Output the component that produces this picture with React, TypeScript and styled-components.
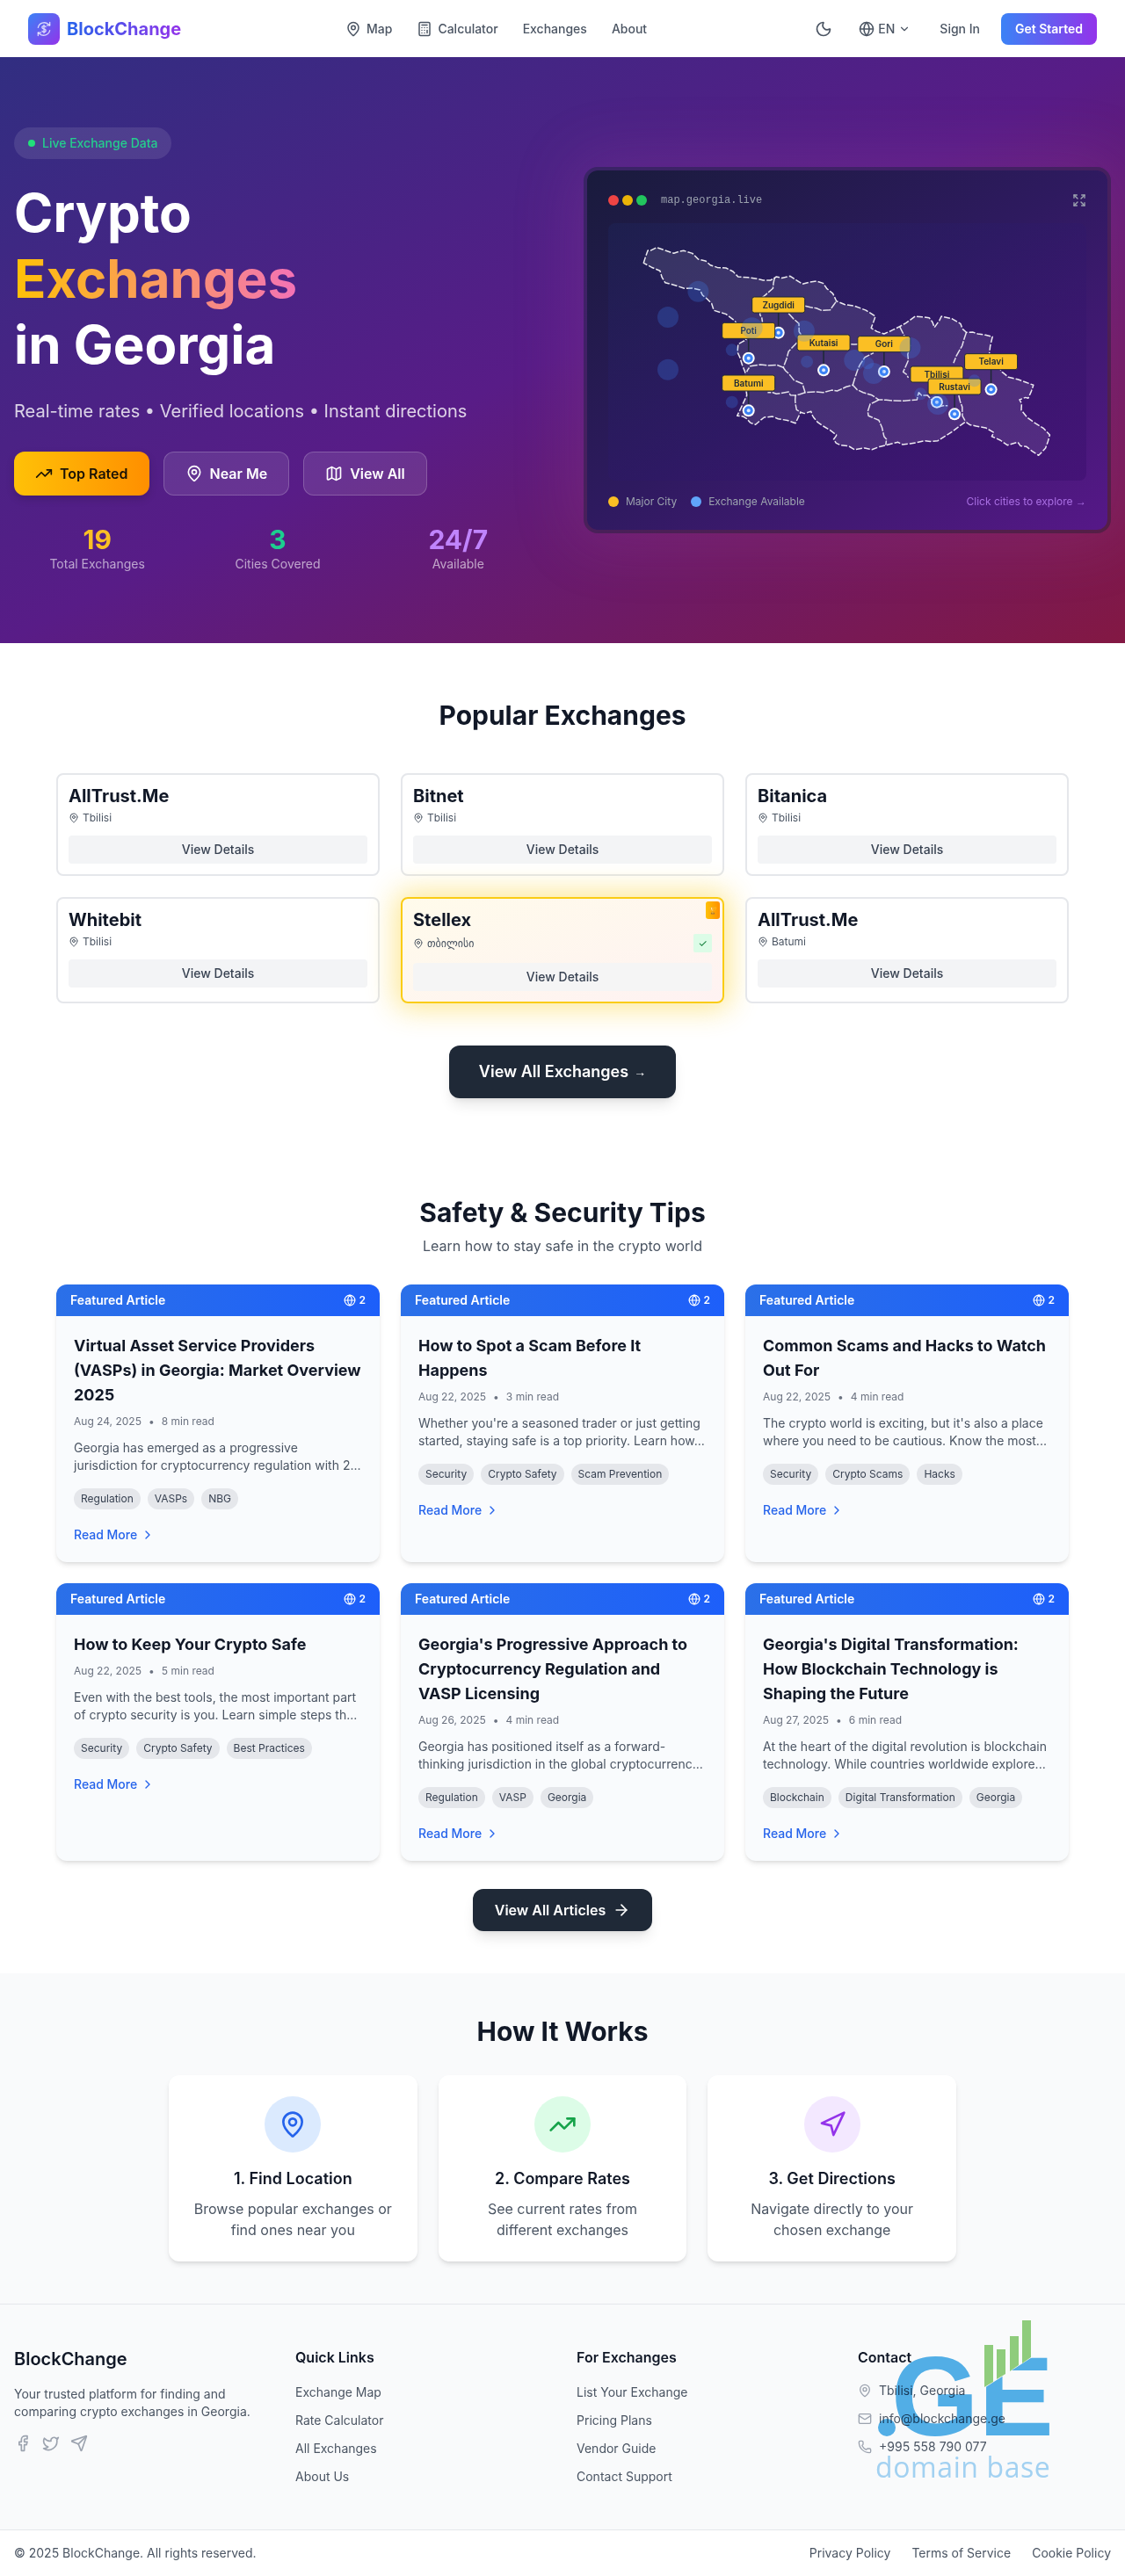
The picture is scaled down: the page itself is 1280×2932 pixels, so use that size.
import React from 'react';
import styled, { createGlobalStyle } from 'styled-components';
import {
  ArrowRight,
  Calculator,
  ChevronDown,
  ChevronRight,
  Expand,
  Facebook,
  Globe,
  Mail,
  Map as MapIcon,
  MapPin,
  Moon,
  Navigation,
  Phone,
  Send,
  TrendingUp,
  Twitter,
} from 'lucide-react';

const GlobalStyle = createGlobalStyle`
  * { box-sizing: border-box; }
  html, body { margin: 0; padding: 0; background: #fff; }
  body {
    font-family: Inter, "DejaVu Sans", "Liberation Sans", sans-serif;
    color: #111827;
    font-size: 16px;
    line-height: 24px;
  }
  a { color: inherit; text-decoration: none; }
  h1, h2, h3, h4, p, ul { margin: 0; padding: 0; }
  li { list-style: none; }
`;

const Page = styled.div`
  position: relative;
  width: 1280px;
  height: 2932px;
  overflow: hidden;
`;

/* nav */
const Nav = styled.nav`
  height: 65px;
  padding: 0 32px;
  display: flex;
  align-items: center;
  background: #fff;
`;

const Brand = styled.a`
  display: flex;
  align-items: center;
  gap: 8px;
  width: 361px;
`;

const BrandMark = styled.span`
  width: 36px;
  height: 36px;
  border-radius: 8px;
  display: flex;
  align-items: center;
  justify-content: center;
  background: linear-gradient(to bottom right, #3b82f6, #9333ea);
`;

const BrandName = styled.span`
  font-size: 20px;
  line-height: 28px;
  font-weight: 700;
  background: linear-gradient(90deg, #2563eb, #9333ea);
  -webkit-background-clip: text;
  background-clip: text;
  color: transparent;
`;

const NavLinks = styled.div`
  display: flex;
  align-items: center;
  gap: 28px;
`;

const NavLink = styled.a`
  display: flex;
  align-items: center;
  gap: 6px;
  font-size: 14px;
  line-height: 20px;
  font-weight: 500;
  color: #4b5563;
`;

const NavRight = styled.div`
  margin-left: auto;
  display: flex;
  align-items: center;
  color: #4b5563;
`;

const ThemeToggle = styled.span`
  display: flex;
  margin-right: 30px;
`;

const LangPicker = styled.span`
  display: flex;
  align-items: center;
  gap: 4px;
  font-size: 14px;
  font-weight: 500;
  margin-right: 33px;
`;

const SignIn = styled.a`
  font-size: 14px;
  font-weight: 500;
  margin-right: 24px;
`;

const GetStarted = styled.a`
  width: 109px;
  height: 36px;
  border-radius: 8px;
  display: flex;
  align-items: center;
  justify-content: center;
  font-size: 14px;
  font-weight: 600;
  color: #fff;
  background: linear-gradient(90deg, #3b82f6, #9333ea);
`;

/* hero */
const Hero = styled.section`
  height: 667px;
  padding: 80px 16px;
  display: grid;
  grid-template-columns: 600px 600px;
  column-gap: 48px;
  align-items: center;
  background: linear-gradient(to bottom right, #312e81 0%, #581c87 50%, #831843 100%);
`;

const LiveBadge = styled.div`
  display: inline-flex;
  align-items: center;
  gap: 8px;
  height: 36px;
  padding: 0 16px;
  border-radius: 18px;
  background: rgba(255, 255, 255, 0.1);
  font-size: 14px;
  font-weight: 500;
  color: #24cf8d;
  margin-bottom: 24px;
  vertical-align: top;
`;

const LiveDot = styled.span`
  width: 8px;
  height: 8px;
  border-radius: 50%;
  background: #22e07a;
`;

const HeroTitle = styled.h1`
  font-size: 60px;
  line-height: 75px;
  font-weight: 700;
  color: #fff;
  margin-bottom: 24px;

  span {
    display: block;
  }
`;

const GradientWord = styled.span`
  width: fit-content;
  background: linear-gradient(90deg, #ffc107, #f472b6);
  -webkit-background-clip: text;
  background-clip: text;
  color: transparent;
`;

const HeroSub = styled.p`
  font-size: 20px;
  line-height: 28px;
  color: rgba(255, 255, 255, 0.8);
  margin-bottom: 32px;
`;

const HeroActions = styled.div`
  display: flex;
  gap: 16px;
  margin-bottom: 32px;
`;

const HeroButton = styled.a<{ $primary?: boolean }>`
  height: 50px;
  padding: 0 24px;
  border-radius: 12px;
  display: flex;
  align-items: center;
  gap: 8px;
  font-weight: 600;
  color: ${(p) => (p.$primary ? '#1a1206' : '#fff')};
  background: ${(p) =>
    p.$primary ? 'linear-gradient(90deg, #ffc107, #ff8f00)' : 'rgba(255, 255, 255, 0.1)'};
  border: ${(p) => (p.$primary ? 'none' : '1px solid rgba(255, 255, 255, 0.2)')};
  box-shadow: ${(p) => (p.$primary ? '0 4px 10px rgba(0, 0, 0, 0.15)' : 'none')};
`;

const Stats = styled.div`
  display: grid;
  grid-template-columns: repeat(3, 1fr);
  gap: 16px;
  text-align: center;
`;

const StatValue = styled.div<{ $color: string }>`
  font-size: 30px;
  line-height: 36px;
  font-weight: 700;
  color: ${(p) => p.$color};
`;

const StatLabel = styled.div`
  font-size: 14px;
  line-height: 20px;
  color: rgba(255, 255, 255, 0.6);
`;

/* map window */
const MapCard = styled.div`
  padding: 24px;
  height: 417px;
  border-radius: 16px;
  border: 4px solid rgba(31, 41, 55, 0.4);
  background: linear-gradient(to bottom right, #191b3c 0%, #2e1a5f 48%, #561888 100%) padding-box;
  box-shadow: 0 0 70px 14px rgba(190, 90, 170, 0.16);
`;

const MapHeader = styled.div`
  height: 20px;
  margin-bottom: 16px;
  display: flex;
  align-items: center;
  justify-content: space-between;
  color: #9ca3af;
`;

const WindowDots = styled.div`
  display: flex;
  align-items: center;
  gap: 4px;
`;

const WindowDot = styled.span<{ $color: string }>`
  width: 12px;
  height: 12px;
  border-radius: 50%;
  background: ${(p) => p.$color};
`;

const WindowUrl = styled.span`
  margin-left: 12px;
  font-family: "Liberation Mono", monospace;
  font-size: 12px;
  color: #9ca3af;
`;

const MapArea = styled.div`
  height: 293px;
  border-radius: 8px;
  background: linear-gradient(to bottom right, rgba(30, 58, 138, 0.14), rgba(49, 10, 101, 0.35));
  margin-bottom: 16px;

  svg {
    display: block;
  }
`;

const MapLegend = styled.div`
  height: 16px;
  display: flex;
  align-items: center;
  font-size: 12px;
  line-height: 16px;
  color: #9ca3af;
`;

const LegendDot = styled.span<{ $color: string }>`
  width: 12px;
  height: 12px;
  border-radius: 50%;
  margin-right: 8px;
  background: ${(p) => p.$color};
`;

const LegendItem = styled.span`
  margin-right: 16px;
`;

const LegendHint = styled.span`
  margin-left: auto;
  color: #c084fc;
  opacity: 0.8;
`;

const SmallArrow = styled.span<{ $size: number }>`
  font-family: "Liberation Sans", sans-serif;
  font-size: ${(p) => p.$size}px;
`;

const CityLabel = styled.text`
  font-family: Inter, sans-serif;
  font-size: 10px;
  font-weight: 600;
  fill: #1f2937;
  text-anchor: middle;
`;

/* sections */
const Section = styled.section<{ $top: number; $bottom: number }>`
  padding: ${(p) => p.$top}px 0 ${(p) => p.$bottom}px;
`;

const Title = styled.h2`
  font-size: 30px;
  line-height: 36px;
  font-weight: 700;
  text-align: center;
  color: #111827;
`;

const Subtitle = styled.p`
  margin-top: 8px;
  text-align: center;
  color: #4b5563;
`;

const ThreeGrid = styled.div<{ $top: number }>`
  width: 1152px;
  margin: ${(p) => p.$top}px auto 0;
  display: grid;
  grid-template-columns: repeat(3, 1fr);
  gap: 24px;
`;

/* exchange cards */
const ExchangeCard = styled.div<{ $featured?: boolean }>`
  position: relative;
  padding: 12px;
  border-radius: 8px;
  border: 2px solid ${(p) => (p.$featured ? '#facc15' : '#e5e7eb')};
  background: ${(p) =>
    p.$featured ? 'linear-gradient(to bottom right, #fffbeb, #fef2f2)' : '#fff'};
  box-shadow: ${(p) => (p.$featured ? '0 0 32px 6px rgba(250, 204, 21, 0.45)' : 'none')};
`;

const ExchangeName = styled.h3`
  font-size: 20px;
  line-height: 24px;
  font-weight: 700;
  color: #111827;
  margin-bottom: 4px;
`;

const ExchangePlace = styled.div`
  min-height: 17px;
  margin-bottom: 12px;
  display: flex;
  align-items: center;
  gap: 4px;
  font-size: 12px;
  line-height: 17px;
  color: #4b5563;
`;

const VerifiedMark = styled.span`
  margin-left: auto;
  width: 21px;
  height: 21px;
  display: flex;
  align-items: center;
  justify-content: center;
  border-radius: 2px;
  background: #dcfce7;
  color: #15803d;
  font-size: 12px;
`;

const CornerBadge = styled.span`
  position: absolute;
  top: 3px;
  right: 3px;
  width: 16px;
  height: 20px;
  border-radius: 3px;
  display: flex;
  align-items: center;
  justify-content: center;
  font-size: 8px;
  color: #fff;
  background: linear-gradient(90deg, #ffc107, #ff8f00);
`;

const DetailsButton = styled.a<{ $tinted?: boolean }>`
  height: 32px;
  display: flex;
  align-items: center;
  justify-content: center;
  border-radius: 4px;
  font-size: 14px;
  font-weight: 500;
  color: #374151;
  background: ${(p) => (p.$tinted ? 'rgba(243, 244, 246, 0.85)' : '#f3f4f6')};
`;

const ViewExchanges = styled.a`
  width: 258px;
  height: 60px;
  margin: 48px auto 0;
  display: flex;
  align-items: center;
  justify-content: center;
  gap: 6px;
  border-radius: 12px;
  font-size: 18px;
  font-weight: 600;
  color: #fff;
  background: #1f2937;
  box-shadow: 0 10px 15px -3px rgba(0, 0, 0, 0.1), 0 4px 6px -4px rgba(0, 0, 0, 0.1);
`;

/* articles */
const ArticleCard = styled.article`
  border-radius: 12px;
  overflow: hidden;
  background: #f9fbfd;
  box-shadow: 0 4px 6px -1px rgba(0, 0, 0, 0.1), 0 2px 4px -2px rgba(0, 0, 0, 0.1);
`;

const ArticleHead = styled.div`
  height: 36px;
  padding: 0 16px;
  display: flex;
  align-items: center;
  justify-content: space-between;
  font-size: 14px;
  font-weight: 600;
  color: #fff;
  background: linear-gradient(90deg, #2b70e8, #1d5ffa);
`;

const HeadCount = styled.span`
  display: flex;
  align-items: center;
  gap: 4px;
  font-size: 12px;
`;

const ArticleBody = styled.div`
  padding: 20px 20px 21px;
`;

const ArticleTitle = styled.h3`
  font-size: 18px;
  line-height: 28px;
  font-weight: 700;
  color: #111827;
  margin-bottom: 8px;
`;

const ArticleMeta = styled.div`
  display: flex;
  align-items: center;
  gap: 8px;
  font-size: 12px;
  line-height: 16px;
  color: #6b7280;
  margin-bottom: 12px;
`;

const ArticleExcerpt = styled.p`
  font-size: 14px;
  line-height: 20px;
  color: #4b5563;
  margin-bottom: 16px;
`;

const TagRow = styled.div`
  display: flex;
  gap: 8px;
  margin-bottom: 19px;
`;

const Tag = styled.span`
  height: 24px;
  padding: 0 8px;
  display: flex;
  align-items: center;
  border-radius: 12px;
  background: #e5e7eb;
  font-size: 12px;
  color: #374151;
`;

const ReadMore = styled.a`
  display: flex;
  align-items: center;
  gap: 4px;
  font-size: 14px;
  line-height: 20px;
  font-weight: 500;
  color: #2563eb;
`;

const ViewArticles = styled.a`
  width: 204px;
  height: 48px;
  margin: 32px auto 0;
  display: flex;
  align-items: center;
  justify-content: center;
  gap: 8px;
  border-radius: 12px;
  font-weight: 600;
  color: #fff;
  background: #1f2937;
  box-shadow: 0 10px 15px -3px rgba(0, 0, 0, 0.1), 0 4px 6px -4px rgba(0, 0, 0, 0.1);
`;

/* how it works */
const HowSection = styled.section`
  padding: 48px 0;
  background: #f9fafb;
`;

const StepGrid = styled.div`
  width: 896px;
  margin: 32px auto 0;
  display: grid;
  grid-template-columns: repeat(3, 1fr);
  gap: 24px;
`;

const StepCard = styled.div`
  padding: 24px;
  text-align: center;
  border-radius: 12px;
  background: #fff;
  box-shadow: 0 4px 6px -1px rgba(0, 0, 0, 0.1), 0 2px 4px -2px rgba(0, 0, 0, 0.1);
`;

const StepIcon = styled.div<{ $bg: string; $color: string }>`
  width: 64px;
  height: 64px;
  margin: 0 auto 16px;
  border-radius: 50%;
  display: flex;
  align-items: center;
  justify-content: center;
  background: ${(p) => p.$bg};
  color: ${(p) => p.$color};
`;

const StepTitle = styled.h3`
  font-size: 18px;
  line-height: 28px;
  font-weight: 600;
  margin-bottom: 8px;
`;

const StepText = styled.p`
  color: #4b5563;
`;

/* footer */
const FooterMain = styled.footer`
  padding: 48px 16px;
  border-top: 1px solid #e5e7eb;
  background: #f9fafb;
  display: grid;
  grid-template-columns: repeat(4, 288px);
  column-gap: 32px;
`;

const FooterBrand = styled.h3`
  font-size: 20px;
  line-height: 28px;
  font-weight: 600;
  margin-bottom: 16px;
`;

const FooterBlurb = styled.p`
  font-size: 14px;
  line-height: 20px;
  color: #4b5563;
  margin-bottom: 16px;
`;

const Socials = styled.div`
  display: flex;
  gap: 12px;
  color: #9ca3af;
`;

const ColumnTitle = styled.h4`
  font-size: 16px;
  line-height: 24px;
  font-weight: 600;
  margin-bottom: 16px;
`;

const FooterLink = styled.li`
  font-size: 14px;
  line-height: 24px;
  color: #4b5563;

  &:not(:last-child) {
    margin-bottom: 8px;
  }
`;

const ContactRow = styled.li`
  display: flex;
  align-items: center;
  gap: 8px;
  font-size: 14px;
  line-height: 20px;
  margin-bottom: 12px;
  color: #4b5563;

  svg {
    color: #9ca3af;
  }
`;

const FooterBottom = styled.div`
  height: 53px;
  padding: 0 16px;
  border-top: 1px solid #e5e7eb;
  display: flex;
  align-items: center;
  justify-content: space-between;
  font-size: 14px;
  color: #4b5563;
`;

const LegalLinks = styled.div`
  display: flex;
  gap: 24px;
`;

/* domain watermark sits over the contact column */
const Watermark = styled.svg`
  position: absolute;
  right: 84px;
  bottom: 106px;
  mix-blend-mode: multiply;
`;

const WatermarkLetters = styled.text`
  font-family: "Liberation Sans", sans-serif;
  font-size: 128px;
  font-weight: 700;
  fill: #54b2ea;
`;

const WatermarkCaption = styled.text`
  font-family: "Open Sans", sans-serif;
  font-size: 32px;
  letter-spacing: 0.6px;
  fill: #a6d6f5;
`;

type City = { name: string; lx: number; ly: number; px: number; py: number };

// everything on the map is read off the reference, in its own pixel grid
const mx = (x: number) => x / 2.53 - 32;
const my = (y: number) => y / 3 - 74;

const cities: City[] = [
  { name: 'Zugdidi', lx: 571, ly: 501, px: 571, py: 596 },
  { name: 'Poti', lx: 485, ly: 589, px: 485, py: 683 },
  { name: 'Kutaisi', lx: 701, ly: 630, px: 701, py: 724 },
  { name: 'Gori', lx: 875, ly: 635, px: 875, py: 729 },
  { name: 'Batumi', lx: 485, ly: 768, px: 485, py: 862 },
  { name: 'Tbilisi', lx: 1027, ly: 738, px: 1027, py: 833 },
  { name: 'Rustavi', lx: 1078, ly: 780, px: 1078, py: 874 },
  { name: 'Telavi', lx: 1183, ly: 695, px: 1183, py: 790 },
];

const hazes: [number, number, number][] = [
  [253, 543, 12], [253, 722, 12], [340, 455, 12], [437, 655, 7], [437, 833, 7],
  [495, 580, 12], [645, 590, 12], [653, 695, 7], [790, 690, 12], [828, 700, 7],
  [845, 735, 12], [950, 648, 12], [1135, 760, 7], [980, 805, 7], [1030, 840, 12],
];

const outline: number[][] = [
  [183, 358], [195, 315], [220, 305], [270, 325], [298, 316], [340, 345], [375, 365], [420, 375],
  [455, 405], [510, 412], [548, 417], [565, 405], [605, 403], [640, 430], [680, 420], [710, 445],
  [738, 488], [790, 505], [850, 540], [838, 580], [875, 600], [920, 575], [965, 540], [1005, 545],
  [1020, 578], [1040, 540], [1095, 565], [1112, 595], [1145, 600], [1187, 610], [1178, 668],
  [1215, 730], [1260, 755], [1305, 775], [1290, 820], [1265, 825], [1270, 860], [1310, 905],
  [1352, 945], [1340, 990], [1320, 1015], [1285, 985], [1260, 970], [1230, 980], [1185, 950],
  [1188, 935], [1140, 915], [1110, 900], [1070, 935], [1030, 965], [990, 965], [950, 975],
  [915, 970], [880, 980], [840, 995], [790, 995], [750, 980], [730, 960], [738, 945], [700, 915],
  [672, 885], [665, 865], [635, 868], [620, 905], [570, 890], [530, 885], [505, 910], [480, 890],
  [452, 880], [480, 810], [475, 730], [460, 680], [455, 635], [478, 620], [445, 555], [385, 520],
  [365, 480], [345, 450], [300, 445], [245, 425], [230, 385],
];

const borders: number[][][] = [
  [[560, 408], [555, 445], [520, 480], [518, 535], [525, 560]],
  [[648, 505], [680, 512], [720, 518], [738, 488]],
  [[600, 530], [630, 565], [640, 610], [600, 660], [585, 715], [540, 708], [490, 710], [480, 730]],
  [[585, 715], [600, 735], [640, 770], [648, 800], [700, 800], [740, 795], [785, 775], [815, 800],
    [860, 825], [900, 828], [970, 825], [975, 800], [1000, 810], [1030, 850], [1058, 845]],
  [[648, 800], [620, 810], [600, 798], [565, 805], [540, 800]],
  [[620, 810], [620, 840], [635, 868]],
  [[785, 775], [800, 720], [820, 680], [845, 665]],
  [[780, 635], [800, 635]],
  [[860, 825], [835, 840], [830, 880], [860, 895], [875, 950], [880, 980]],
  [[920, 575], [950, 640], [945, 690], [930, 730], [945, 750]],
  [[1112, 595], [1100, 640], [1075, 700]],
  [[1090, 810], [1100, 850], [1110, 900]],
];

// small fixed wobble so the borders read as a hand traced coastline
const trace = (pts: number[][], close?: boolean) => {
  let seed = 3;
  const out: string[] = [];
  pts.forEach((p, i) => {
    const next = pts[i + 1] || (close ? pts[0] : null);
    out.push(`${mx(p[0]).toFixed(1)} ${my(p[1]).toFixed(1)}`);
    if (next) {
      seed = (seed * 7 + 5) % 11;
      const wob = (seed - 5) * 0.35;
      const midX = mx((p[0] + next[0]) / 2) + wob;
      const midY = my((p[1] + next[1]) / 2) - wob;
      out.push(`${midX.toFixed(1)} ${midY.toFixed(1)}`);
    }
  });
  return `M${out.join('L')}${close ? 'Z' : ''}`;
};

const GeorgiaMap: React.FC = () => (
  <svg width="544" height="293" viewBox="0 0 544 293">
    <path
      d={trace(outline, true)}
      fill="rgba(255,255,255,0.1)"
      stroke="rgba(255,255,255,0.9)"
      strokeWidth="1.5"
      strokeDasharray="7 2"
      strokeLinejoin="round"
    />
    {borders.map((b, i) => (
      <path
        key={i}
        d={trace(b)}
        fill="none"
        stroke="rgba(255,255,255,0.85)"
        strokeWidth="1.5"
        strokeDasharray="9 1.5"
        strokeLinejoin="round"
      />
    ))}
    {cities.map((c) => (
      <g key={c.name}>
        <line
          x1={mx(c.px)}
          x2={mx(c.px)}
          y1={my(c.ly)}
          y2={my(c.py)}
          stroke="#1f2937"
          strokeWidth="1.5"
        />
        <circle cx={mx(c.px)} cy={my(c.py)} r="7" fill="#fff" />
        <circle cx={mx(c.px)} cy={my(c.py)} r="5" fill="#3b82f6" />
        <circle cx={mx(c.px)} cy={my(c.py)} r="2" fill="#dbeafe" />
        <rect
          x={mx(c.lx) - 30}
          y={my(c.ly) - 9}
          width="60"
          height="18"
          rx="2.5"
          fill="#fbbf24"
          stroke="#1f2937"
          strokeWidth="1"
        />
        <CityLabel x={mx(c.lx)} y={my(c.ly) + 3.5}>
          {c.name}
        </CityLabel>
      </g>
    ))}
    {hazes.map(([x, y, r], i) => (
      <circle key={i} cx={mx(x)} cy={my(y)} r={r} fill="#3b82f6" opacity="0.25" />
    ))}
  </svg>
);

const LogoGlyph: React.FC = () => (
  <svg width="20" height="20" viewBox="0 0 24 24" fill="none" stroke="rgba(255,255,255,0.75)" strokeWidth="1.6" strokeLinecap="round" strokeLinejoin="round">
    <path d="M4 10a8.5 8.5 0 0 1 14-4.5L20 7" />
    <path d="M20 3v4h-4" />
    <path d="M20 14a8.5 8.5 0 0 1-14 4.5L4 17" />
    <path d="M4 21v-4h4" />
    <path d="M14.5 9.2c-.5-.8-1.4-1.2-2.5-1.2-1.5 0-2.6.8-2.6 2s1 1.7 2.6 2 2.6.8 2.6 2-1.1 2-2.6 2c-1.1 0-2-.4-2.5-1.2M12 6.5v11" />
  </svg>
);

const exchanges = [
  { name: 'AllTrust.Me', place: 'Tbilisi' },
  { name: 'Bitnet', place: 'Tbilisi' },
  { name: 'Bitanica', place: 'Tbilisi' },
  { name: 'Whitebit', place: 'Tbilisi' },
  { name: 'Stellex', place: 'თბილისი', featured: true },
  { name: 'AllTrust.Me', place: 'Batumi' },
];

const articles = [
  {
    title: 'Virtual Asset Service Providers (VASPs) in Georgia: Market Overview 2025',
    date: 'Aug 24, 2025',
    read: '8 min read',
    text: 'Georgia has emerged as a progressive jurisdiction for cryptocurrency regulation with 2...',
    tags: ['Regulation', 'VASPs', 'NBG'],
  },
  {
    title: 'How to Spot a Scam Before It Happens',
    date: 'Aug 22, 2025',
    read: '3 min read',
    text: "Whether you're a seasoned trader or just getting started, staying safe is a top priority. Learn how...",
    tags: ['Security', 'Crypto Safety', 'Scam Prevention'],
  },
  {
    title: 'Common Scams and Hacks to Watch Out For',
    date: 'Aug 22, 2025',
    read: '4 min read',
    text: "The crypto world is exciting, but it's also a place where you need to be cautious. Know the most...",
    tags: ['Security', 'Crypto Scams', 'Hacks'],
  },
  {
    title: 'How to Keep Your Crypto Safe',
    date: 'Aug 22, 2025',
    read: '5 min read',
    text: 'Even with the best tools, the most important part of crypto security is you. Learn simple steps th...',
    tags: ['Security', 'Crypto Safety', 'Best Practices'],
  },
  {
    title: "Georgia's Progressive Approach to Cryptocurrency Regulation and VASP Licensing",
    date: 'Aug 26, 2025',
    read: '4 min read',
    text: 'Georgia has positioned itself as a forward-thinking jurisdiction in the global cryptocurrenc...',
    tags: ['Regulation', 'VASP', 'Georgia'],
  },
  {
    title: "Georgia's Digital Transformation: How Blockchain Technology is Shaping the Future",
    date: 'Aug 27, 2025',
    read: '6 min read',
    text: 'At the heart of the digital revolution is blockchain technology. While countries worldwide explore...',
    tags: ['Blockchain', 'Digital Transformation', 'Georgia'],
  },
];

const quickLinks = ['Exchange Map', 'Rate Calculator', 'All Exchanges', 'About Us'];
const vendorLinks = ['List Your Exchange', 'Pricing Plans', 'Vendor Guide', 'Contact Support'];

export default function App() {
  return (
    <Page>
      <GlobalStyle />
      <Nav>
        <Brand>
          <BrandMark>
            <LogoGlyph />
          </BrandMark>
          <BrandName>BlockChange</BrandName>
        </Brand>
        <NavLinks>
          <NavLink>
            <MapPin size={18} />
            Map
          </NavLink>
          <NavLink>
            <Calculator size={18} />
            Calculator
          </NavLink>
          <NavLink>Exchanges</NavLink>
          <NavLink>About</NavLink>
        </NavLinks>
        <NavRight>
          <ThemeToggle>
            <Moon size={20} />
          </ThemeToggle>
          <LangPicker>
            <Globe size={18} />
            EN
            <ChevronDown size={14} />
          </LangPicker>
          <SignIn>Sign In</SignIn>
          <GetStarted>Get Started</GetStarted>
        </NavRight>
      </Nav>

      <Hero>
        <div>
          <LiveBadge>
            <LiveDot />
            Live Exchange Data
          </LiveBadge>
          <HeroTitle>
            <span>Crypto</span>
            <GradientWord>Exchanges</GradientWord>
            <span>in Georgia</span>
          </HeroTitle>
          <HeroSub>Real-time rates • Verified locations • Instant directions</HeroSub>
          <HeroActions>
            <HeroButton $primary>
              <TrendingUp size={20} />
              Top Rated
            </HeroButton>
            <HeroButton>
              <MapPin size={20} />
              Near Me
            </HeroButton>
            <HeroButton>
              <MapIcon size={20} />
              View All
            </HeroButton>
          </HeroActions>
          <Stats>
            <div>
              <StatValue $color="#fbbf24">19</StatValue>
              <StatLabel>Total Exchanges</StatLabel>
            </div>
            <div>
              <StatValue $color="#1ccf8f">3</StatValue>
              <StatLabel>Cities Covered</StatLabel>
            </div>
            <div>
              <StatValue $color="#c084fc">24/7</StatValue>
              <StatLabel>Available</StatLabel>
            </div>
          </Stats>
        </div>
        <MapCard>
          <MapHeader>
            <WindowDots>
              <WindowDot $color="#ef4444" />
              <WindowDot $color="#eab308" />
              <WindowDot $color="#22c55e" />
              <WindowUrl>map.georgia.live</WindowUrl>
            </WindowDots>
            <Expand size={16} />
          </MapHeader>
          <MapArea>
            <GeorgiaMap />
          </MapArea>
          <MapLegend>
            <LegendDot $color="#fbbf24" />
            <LegendItem>Major City</LegendItem>
            <LegendDot $color="#60a5fa" />
            <LegendItem>Exchange Available</LegendItem>
            <LegendHint>
              Click cities to explore <SmallArrow $size={12}>→</SmallArrow>
            </LegendHint>
          </MapLegend>
        </MapCard>
      </Hero>

      <Section $top={64} $bottom={64}>
        <Title>Popular Exchanges</Title>
        <ThreeGrid $top={48}>
          {exchanges.map((ex, i) => (
            <ExchangeCard key={i} $featured={ex.featured}>
              {ex.featured && <CornerBadge>🏆</CornerBadge>}
              <ExchangeName>{ex.name}</ExchangeName>
              <ExchangePlace>
                <MapPin size={12} />
                {ex.place}
                {ex.featured && <VerifiedMark>✓</VerifiedMark>}
              </ExchangePlace>
              <DetailsButton $tinted={ex.featured}>View Details</DetailsButton>
            </ExchangeCard>
          ))}
        </ThreeGrid>
        <ViewExchanges>
          View All Exchanges <SmallArrow $size={14}>→</SmallArrow>
        </ViewExchanges>
      </Section>

      <Section $top={48} $bottom={48}>
        <Title>Safety &amp; Security Tips</Title>
        <Subtitle>Learn how to stay safe in the crypto world</Subtitle>
        <ThreeGrid $top={32}>
          {articles.map((a) => (
            <ArticleCard key={a.title}>
              <ArticleHead>
                Featured Article
                <HeadCount>
                  <Globe size={14} />2
                </HeadCount>
              </ArticleHead>
              <ArticleBody>
                <ArticleTitle>{a.title}</ArticleTitle>
                <ArticleMeta>
                  <span>{a.date}</span>
                  <span>•</span>
                  <span>{a.read}</span>
                </ArticleMeta>
                <ArticleExcerpt>{a.text}</ArticleExcerpt>
                <TagRow>
                  {a.tags.map((t) => (
                    <Tag key={t}>{t}</Tag>
                  ))}
                </TagRow>
                <ReadMore>
                  Read More
                  <ChevronRight size={16} />
                </ReadMore>
              </ArticleBody>
            </ArticleCard>
          ))}
        </ThreeGrid>
        <ViewArticles>
          View All Articles
          <ArrowRight size={20} />
        </ViewArticles>
      </Section>

      <HowSection>
        <Title>How It Works</Title>
        <StepGrid>
          <StepCard>
            <StepIcon $bg="#dbeafe" $color="#2563eb">
              <MapPin size={32} />
            </StepIcon>
            <StepTitle>1. Find Location</StepTitle>
            <StepText>Browse popular exchanges or find ones near you</StepText>
          </StepCard>
          <StepCard>
            <StepIcon $bg="#dcfce7" $color="#16a34a">
              <TrendingUp size={32} />
            </StepIcon>
            <StepTitle>2. Compare Rates</StepTitle>
            <StepText>See current rates from different exchanges</StepText>
          </StepCard>
          <StepCard>
            <StepIcon $bg="#f3e8ff" $color="#9333ea">
              <Navigation size={32} />
            </StepIcon>
            <StepTitle>3. Get Directions</StepTitle>
            <StepText>Navigate directly to your chosen exchange</StepText>
          </StepCard>
        </StepGrid>
      </HowSection>

      <FooterMain>
        <div>
          <FooterBrand>BlockChange</FooterBrand>
          <FooterBlurb>
            Your trusted platform for finding and
            <br />
            comparing crypto exchanges in Georgia.
          </FooterBlurb>
          <Socials>
            <Facebook size={20} />
            <Twitter size={20} />
            <Send size={20} />
          </Socials>
        </div>
        <div>
          <ColumnTitle>Quick Links</ColumnTitle>
          <ul>
            {quickLinks.map((l) => (
              <FooterLink key={l}>{l}</FooterLink>
            ))}
          </ul>
        </div>
        <div>
          <ColumnTitle>For Exchanges</ColumnTitle>
          <ul>
            {vendorLinks.map((l) => (
              <FooterLink key={l}>{l}</FooterLink>
            ))}
          </ul>
        </div>
        <div>
          <ColumnTitle>Contact</ColumnTitle>
          <ul>
            <ContactRow>
              <MapPin size={16} />
              Tbilisi, Georgia
            </ContactRow>
            <ContactRow>
              <Mail size={16} />
              info@blockchange.ge
            </ContactRow>
            <ContactRow>
              <Phone size={16} />
              +995 558 790 077
            </ContactRow>
          </ul>
        </div>
      </FooterMain>
      <FooterBottom>
        <span>© 2025 BlockChange. All rights reserved.</span>
        <LegalLinks>
          <span>Privacy Policy</span>
          <span>Terms of Service</span>
          <span>Cookie Policy</span>
        </LegalLinks>
      </FooterBottom>

      <Watermark width="200" height="190" viewBox="0 0 200 190">
        <defs>
          <clipPath id="letter-cut">
            <polygon points="0 0 124 0 124 82 200 33 200 190 0 190" />
          </clipPath>
        </defs>
        <circle cx="13" cy="127" r="10" fill="#54b2ea" />
        <WatermarkLetters x="18" y="136" clipPath="url(#letter-cut)">
          GE
        </WatermarkLetters>
        <polygon points="124,33 134,33 134,75 124,81" fill="#93d07e" />
        <polygon points="138,38 148,38 148,66 138,72" fill="#93d07e" />
        <polygon points="153,23 163,23 163,56 153,63" fill="#93d07e" />
        <polygon points="167,5 177,5 177,47 167,54" fill="#93d07e" />
        <WatermarkCaption x="0" y="184">
          domain base
        </WatermarkCaption>
      </Watermark>
    </Page>
  );
}
